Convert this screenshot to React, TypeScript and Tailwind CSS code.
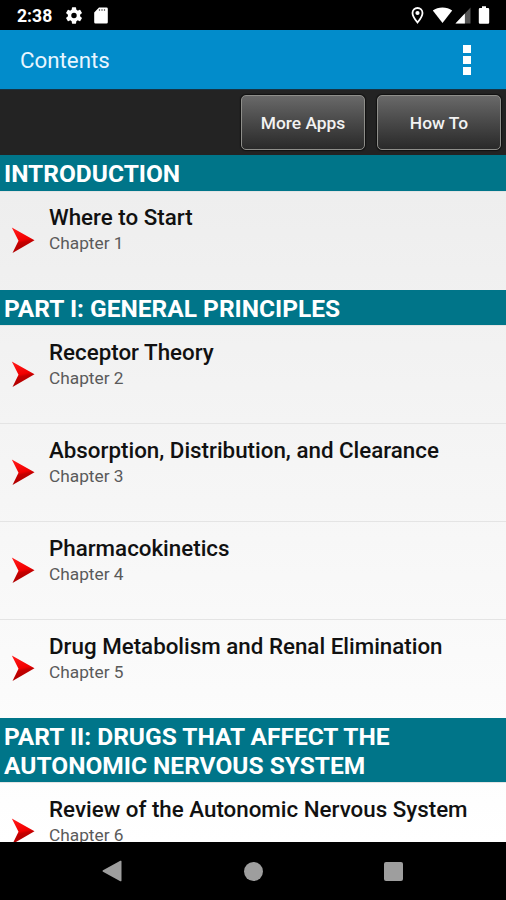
interface Chapter {
  title: string;
  number: number;
}

interface Section {
  heading: string;
  chapters: Chapter[];
}

const SECTIONS: Section[] = [
  { heading: 'INTRODUCTION', chapters: [{ title: 'Where to Start', number: 1 }] },
  {
    heading: 'PART I: GENERAL PRINCIPLES',
    chapters: [
      { title: 'Receptor Theory', number: 2 },
      { title: 'Absorption, Distribution, and Clearance', number: 3 },
      { title: 'Pharmacokinetics', number: 4 },
      { title: 'Drug Metabolism and Renal Elimination', number: 5 },
    ],
  },
  {
    heading: 'PART II: DRUGS THAT AFFECT THE AUTONOMIC NERVOUS SYSTEM',
    chapters: [{ title: 'Review of the Autonomic Nervous System', number: 6 }],
  },
];

const BAR_BUTTON =
  'h-[55px] w-[124px] rounded-[5px] border border-[#8e8e8a] bg-linear-to-b from-[#696969] to-[#2a2a2a] pt-[2px] text-[17.4px] font-medium text-[#f2f2f2] shadow-[0_0_1px_1px_#111]';

function StatusBar() {
  return (
    <div className="flex h-[30px] shrink-0 items-center bg-black pl-[17px] pr-[16px] text-white">
      <span className="w-[48px] pt-[3px] text-[17.6px] font-bold leading-none">2:38</span>
      <svg className="mt-px h-[17px] w-[18px]" viewBox="2 2 20 20" fill="currentColor">
        <path d="M19.14 12.94c.04-.3.06-.61.06-.94s-.02-.64-.07-.94l2.03-1.58a.49.49 0 0 0 .12-.61l-1.92-3.32a.49.49 0 0 0-.59-.22l-2.39.96a7 7 0 0 0-1.62-.94l-.36-2.54A.48.48 0 0 0 13.92 2.4h-3.84a.48.48 0 0 0-.47.41l-.36 2.54a7.3 7.3 0 0 0-1.62.94l-2.39-.96a.48.48 0 0 0-.59.22L2.74 8.87a.48.48 0 0 0 .12.61l2.03 1.58a6 6 0 0 0 0 1.88l-2.03 1.58a.49.49 0 0 0-.12.61l1.92 3.32c.12.22.37.29.59.22l2.39-.96c.5.38 1.03.7 1.62.94l.36 2.54c.05.24.24.41.48.41h3.84c.24 0 .44-.17.47-.41l.36-2.54a7 7 0 0 0 1.62-.94l2.39.96c.22.08.47 0 .59-.22l1.92-3.32a.48.48 0 0 0-.12-.61zM12 15.2a3.2 3.2 0 1 1 0-6.4 3.2 3.2 0 0 1 0 6.4z" />
      </svg>
      <svg className="ml-[11px] h-[17px] w-[14px]" viewBox="0 0 14 17">
        <path d="M5 .5h7.500a1.300 1.300 0 0 1 1.300 1.300v13.400a1.300 1.300 0 0 1-1.300 1.300h-11A1.300 1.300 0 0 1 .2 15.200V5.500z" fill="currentColor" />
        <path d="M5.500 2v2M8 2v2M10.500 2v2" stroke="#777" strokeWidth="1.200" />
      </svg>
      <div className="ml-auto flex items-center">
        <svg className="h-[17px] w-[13px]" viewBox="0 0 13 17">
          <path d="M6.500 1a5 5 0 0 0-5 5c0 3.600 5 9.500 5 9.500s5-5.900 5-9.500a5 5 0 0 0-5-5z" fill="none" stroke="currentColor" strokeWidth="1.800" />
          <circle cx="6.500" cy="6" r="2.100" fill="currentColor" />
        </svg>
        <svg className="ml-[8px] h-[17px] w-[21px]" viewBox="0 0 21 17">
          <path d="M10.500 16L.8 3.500C3.500 1.400 6.800.5 10.500.5s7 .9 9.700 3z" fill="currentColor" />
        </svg>
        <svg className="ml-[2px] h-[17px] w-[16px]" viewBox="0 0 17 17" preserveAspectRatio="none">
          <path d="M16.500.5v16H.5z" fill="#555" />
          <path d="M10.500 6.500v10H.5z" fill="currentColor" />
        </svg>
        <svg className="ml-[7px] h-[18px] w-[12px]" viewBox="0 0 12 18">
          <path d="M4 .3h4v1.700h2A1.200 1.200 0 0 1 11.200 3.200v13.400a1.200 1.200 0 0 1-1.200 1.200H2a1.200 1.200 0 0 1-1.200-1.200V3.200A1.200 1.200 0 0 1 2 2h2z" fill="currentColor" />
        </svg>
      </div>
    </div>
  );
}

function Arrow() {
  return (
    <svg className="mt-[34px] h-[28px] w-[26px] shrink-0" viewBox="0 0 26 28">
      <defs>
        <linearGradient id="arrowFill" x1="0.3" y1="0" x2="0.5" y2="1">
          <stop offset="0" stopColor="#ff1a1a" />
          <stop offset="0.5" stopColor="#f20000" />
          <stop offset="0.6" stopColor="#c40000" />
          <stop offset="1" stopColor="#a80000" />
        </linearGradient>
      </defs>
      <path d="M.8 1.500L23.500 14.300 1.500 27l6-12.300z" fill="url(#arrowFill)" />
    </svg>
  );
}

function ChapterRow({ chapter }: { chapter: Chapter }) {
  return (
    <li className="flex h-[98px] pl-[11px]">
      <Arrow />
      <div className="ml-[12px] pt-[11.5px]">
        <h3 className="text-[22.35px] font-medium leading-[28px] text-[#111]">{chapter.title}</h3>
        <p className="text-[17.3px] leading-[25px] text-[#5a5a5a]">Chapter {chapter.number}</p>
      </div>
    </li>
  );
}

export default function App() {
  return (
    <div className="flex h-[900px] w-[506px] flex-col overflow-hidden bg-black font-['Roboto',sans-serif]">
      <StatusBar />

      <header className="flex h-[59px] shrink-0 items-center justify-between bg-[#028ccb] pl-[20px] pr-[35px]">
        <h1 className="pt-[2px] text-[22.3px] leading-none text-[#e8f6ff]">Contents</h1>
        <button type="button" aria-label="Menu" className="flex flex-col gap-[3px]">
          <span className="h-[8px] w-[8px] bg-white" />
          <span className="h-[8px] w-[8px] bg-white" />
          <span className="h-[8px] w-[8px] bg-white" />
        </button>
      </header>

      <div className="flex h-[66px] shrink-0 items-center justify-end gap-[12px] border-t border-[#153344] bg-[#232323] pr-[5px]">
        <button type="button" className={BAR_BUTTON}>More Apps</button>
        <button type="button" className={BAR_BUTTON}>How To</button>
      </div>

      {/* Chapter list, cut off by the navigation bar */}
      <main className="h-[687px] shrink-0 overflow-hidden bg-linear-to-b from-[#ededed] to-white">
        {SECTIONS.map((section) => (
          <section key={section.heading}>
            <h2 className="bg-[#007589] pb-[2px] pl-[4px] pr-[60px] pt-[5px] text-[24.5px] font-bold leading-[28.5px] text-white">
              {section.heading}
            </h2>
            <ul className="divide-y divide-[#e4e4e4] border-t border-[#e4e4e4]">
              {section.chapters.map((chapter) => (
                <ChapterRow key={chapter.number} chapter={chapter} />
              ))}
            </ul>
          </section>
        ))}
      </main>

      <nav className="flex h-[58px] shrink-0 items-center bg-black pl-[102px] text-[#9e9e9e]">
        <svg className="h-[22px] w-[20px]" viewBox="0 0 20 22" fill="currentColor">
          <path d="M19.500 1.500v19a.8.8 0 0 1-1.200.7L1 11.700a.8.8 0 0 1 0-1.400L18.300.8a.8.8 0 0 1 1.200.7z" />
        </svg>
        <span className="ml-[122px] h-[19px] w-[19px] rounded-full bg-current" />
        <span className="ml-[121px] h-[19px] w-[19px] rounded-[2px] bg-current" />
      </nav>
    </div>
  );
}
